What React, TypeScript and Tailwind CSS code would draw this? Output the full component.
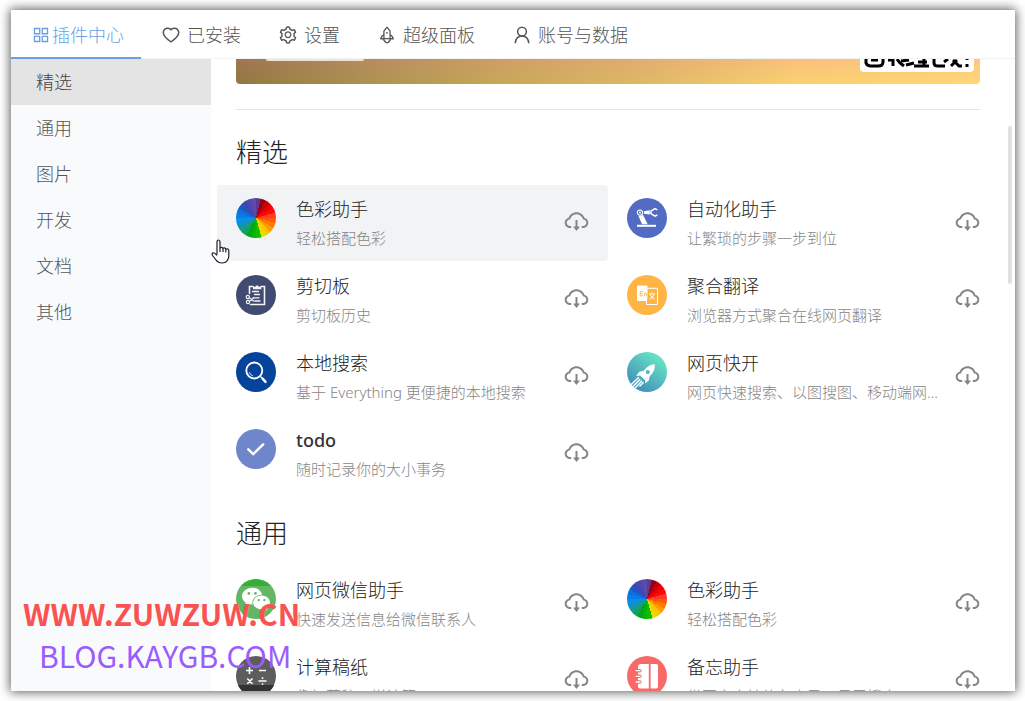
import type { ReactNode } from "react";
import {
  AiFillWechat,
  AiOutlineAppstore,
  AiOutlineCloudDownload,
  AiOutlineHeart,
  AiOutlineRocket,
  AiOutlineSetting,
} from "react-icons/ai";

type Plugin = { name: string; desc: string; icon: ReactNode; hovered?: boolean };

const wheel = [
  "#9b0012", "#c8000a", "#f00000", "#ff0808", "#ff3b30", "#ff5a00", "#ff7a00", "#ff9b00",
  "#ffc400", "#efd800", "#12bb00", "#00b800", "#00a51c", "#12a05a", "#159a8c", "#0d93bd",
  "#0a8ee8", "#0a7ce8", "#0f6fdc", "#1a58c4", "#3a49b4", "#4f47ae", "#5f4ba6", "#5b3a90",
];

const wheelStops = wheel.map((c, i) => `${c} ${i * 15}deg ${(i + 1) * 15}deg`).join(",");

function ColorWheel() {
  return (
    <div
      className="size-10 rounded-full"
      style={{ backgroundImage: `conic-gradient(from 14deg,${wheelStops})` }}
    />
  );
}

function Disc({ fill, children }: { fill: string; children: ReactNode }) {
  return (
    <svg viewBox="0 0 40 40" className="size-10" aria-hidden="true">
      <circle cx="20" cy="20" r="20" fill={fill} />
      {children}
    </svg>
  );
}

const clipboardIcon = (
  <Disc fill="#414a70">
    <g fill="none" stroke="#f2f3f7" strokeWidth="1.6" strokeLinecap="round">
      <path d="M17 11.5h-3.5v7M25 11.5h3.500v18H14.5" />
      <path d="M16.5 16.5h6M18.5 19.5h5M17 22.8h6M19 26h5" strokeWidth="1.3" />
      <circle cx="11.8" cy="22" r="1.6" strokeWidth="1.2" />
      <circle cx="12" cy="27" r="1.6" strokeWidth="1.2" />
      <path d="M13.3 22.8l4.700 3.400M13.3 26.2l4.200-3" strokeWidth="1.2" />
    </g>
    <path d="M17 14.2v-2.4h2.3a1.9 1.9 0 0 1 3.6 0h2.4v2.4z" fill="#f2f3f7" />
  </Disc>
);

const searchIcon = (
  <Disc fill="#06439a">
    <circle cx="18.3" cy="18.5" r="8" fill="none" stroke="#fff" strokeWidth="1.8" />
    <path d="M13.2 20.2a5.6 5.6 0 0 0 3.6 3.6" fill="none" stroke="#fff" strokeWidth=".9" />
    <path d="M24.500 24.500l1.500 1.500" stroke="#fff" strokeWidth="1.3" />
    <path d="M26.500 26.500l3 3.300" stroke="#fff" strokeWidth="2.500" strokeLinecap="round" />
  </Disc>
);

const todoIcon = (
  <Disc fill="#7086cb">
    <path d="M12.3 20.3l4.9 4.7 10-9.6" fill="none" stroke="#fff" strokeWidth="2.400" strokeLinecap="round" />
  </Disc>
);

const robotIcon = (
  <Disc fill="#516cc2">
    <circle cx="13" cy="14.6" r="2.6" fill="none" stroke="#fff" strokeWidth="1.1" />
    <circle cx="13" cy="14.6" r="1" fill="#fff" />
    <path d="M11.5 18.3l4.6-1.4 4.6 9.3h-5.6z" fill="#fff" />
    <path d="M17 13.2l5.8-1v4.4l-5.8-.8z" fill="#fff" />
    <path d="M30.3 11.8l-2.4-1.2-4 2.6v2.4l4 2.6 2.4-1.2" fill="none" stroke="#fff" strokeWidth="1.5" />
    <path d="M10 26.8h19v2H10z" fill="#fff" />
  </Disc>
);

const translateIcon = (
  <Disc fill="#ffb545">
    <path d="M20.500 13.3h10v16.2h-11V26" fill="none" stroke="#fff" strokeWidth="1" />
    <path d="M11 10.5h8.5a1 1 0 0 1 1 1v7.500l-.5 7H11.3a1.3 1.3 0 0 1-1.3-1.3V11.5a1 1 0 0 1 1-1z" fill="#fff" />
    <path d="M16.2 16.6h-3v4.2h3M13.2 18.7h2.6M17.6 20.9v-2.7q1.8-.7 2 .8v1.9" fill="none" stroke="#ffb545" strokeWidth=".9" />
    <path d="M22.2 18.8h5.8M25 17.4v1.4M23 24.2q3.4-1.7 4-5.2M23.2 19.2q1 3.600 4.600 5" fill="none" stroke="#fff" strokeWidth="1" />
  </Disc>
);

const rocketIcon = (
  <Disc fill="url(#rocket-sky)">
    <defs>
      <linearGradient id="rocket-sky" x1="0.2" y1="0.9" x2="0.8" y2="0.1">
        <stop offset="0" stopColor="#418fb9" />
        <stop offset="1" stopColor="#68e5c3" />
      </linearGradient>
    </defs>
    <path
      fillRule="evenodd"
      fill="#fff"
      d="M27.8 12.2q-6.6.2-11 6.6l-4.5 1-3.2 4.2 4-.5 5.3 5.1-.3 3 3.7-3.1 1-4.6q5.4-4.2 5-11.7zM20.8 18a2.1 2.1 0 1 1 0 4.2 2.1 2.1 0 0 1 0-4.2z"
    />
    <path d="M11.8 25.2l-7.5 7.3M13.3 27l-7.2 7.6M15 28.7l-6.8 7.2M16.5 30.2l-4 4.3" stroke="#fff" strokeWidth="1.5" />
  </Disc>
);

const wechatIcon = (
  <Disc fill="#63b764">
    <path d="M5 7a20 20 0 0 1 30 0z" fill="#35ae35" />
    <foreignObject x="4" y="4" width="32" height="32">
      <AiFillWechat className="size-8 text-white" />
    </foreignObject>
  </Disc>
);

const calcIcon = (
  <Disc fill="#5d5d5d">
    <path d="M1.8 29h36.4a20 20 0 0 1-36.4 0z" fill="#333" />
    <path
      d="M10 14.5h7M13.5 11v7M23 14.5h7M11.3 22.5l5.2 5.2M16.5 22.5l-5.2 5.2M22.5 25h8M26.5 21.3v1.6M26.5 27.2v1.6"
      stroke="#fff"
      strokeWidth="1.6"
      fill="none"
    />
  </Disc>
);

const memoIcon = (
  <Disc fill="#f96968">
    <path d="M14 8h7.8v24.4H13a2 2 0 0 1-2-2V11a3 3 0 0 1 3-3z" fill="#fff" />
    <path d="M23.6 8h5.8a1.6 1.6 0 0 1 1.6 1.6v21.2a1.6 1.6 0 0 1-1.6 1.6h-5.8z" fill="#fff" />
    <g fill="none" stroke="#f96968" strokeWidth="3.4" strokeLinecap="round">
      <path d="M10 14.7h3M10 20.3h3M10 26h3" />
    </g>
    <g fill="none" stroke="#fff" strokeWidth="1.3" strokeLinecap="round">
      <path d="M9 14.7h4.2M9 20.3h4.2M9 26h4.2" />
    </g>
  </Disc>
);

const sections: { title: string; plugins: Plugin[] }[] = [
  {
    title: "精选",
    plugins: [
      { name: "色彩助手", desc: "轻松搭配色彩", icon: <ColorWheel />, hovered: true },
      { name: "自动化助手", desc: "让繁琐的步骤一步到位", icon: robotIcon },
      { name: "剪切板", desc: "剪切板历史", icon: clipboardIcon },
      { name: "聚合翻译", desc: "浏览器方式聚合在线网页翻译", icon: translateIcon },
      { name: "本地搜索", desc: "基于 Everything 更便捷的本地搜索", icon: searchIcon },
      { name: "网页快开", desc: "网页快速搜索、以图搜图、移动端网页预览", icon: rocketIcon },
      { name: "todo", desc: "随时记录你的大小事务", icon: todoIcon },
    ],
  },
  {
    title: "通用",
    plugins: [
      { name: "网页微信助手", desc: "快速发送信息给微信联系人", icon: wechatIcon },
      { name: "色彩助手", desc: "轻松搭配色彩", icon: <ColorWheel /> },
      { name: "计算稿纸", desc: "像打草稿一样计算", icon: calcIcon },
      { name: "备忘助手", desc: "带图文支持的备忘录、易于搜索", icon: memoIcon },
    ],
  },
];

const categories = ["精选", "通用", "图片", "开发", "文档", "其他"];

function UserIcon() {
  return (
    <svg viewBox="0 0 20 20" className="size-5" fill="none" stroke="currentColor" strokeWidth="1.5" aria-hidden="true">
      <circle cx="10" cy="6.6" r="4.4" />
      <path d="M3.2 18.2C3.6 14 6 11 10 11s6.400 3 6.800 7.200" />
    </svg>
  );
}

function Tab({ icon, label, active }: { icon: ReactNode; label: string; active?: boolean }) {
  return (
    <button
      type="button"
      className={
        active
          ? "flex h-[49px] items-center gap-px border-b-2 border-[#6a9fe3] pl-5 pr-[17px] pt-0.5 text-[#6a9fe3]"
          : "flex h-[49px] items-center gap-1.5 border-b-2 border-transparent pl-5 pr-[17px] pt-0.5 text-[#555]"
      }
    >
      {icon}
      <span>{label}</span>
    </button>
  );
}

function PluginCard({ plugin }: { plugin: Plugin }) {
  return (
    <article
      className={
        plugin.hovered
          ? "flex h-[76px] rounded bg-[#f2f3f5] px-[18px] pl-[19px]"
          : "flex h-[76px] rounded px-[18px] pl-[19px]"
      }
    >
      <div className="mt-[13px] size-10 shrink-0">{plugin.icon}</div>
      <div className="ml-5 mr-[11px] min-w-0 flex-1 pt-[11px]">
        <h3 className={plugin.name === "todo" ? "truncate text-lg/[26px] font-medium text-[#333]" : "truncate text-lg/[26px] text-[#222]"}>
          {plugin.name}
        </h3>
        <p className="mt-[3px] truncate text-[15px]/[26px] text-[#858585]">{plugin.desc}</p>
      </div>
      <button type="button" aria-label={`下载 ${plugin.name}`} className="mt-[23px] self-start text-[#858585]">
        <AiOutlineCloudDownload className="size-[27px]" />
      </button>
    </article>
  );
}

export default function App() {
  return (
    <div className="relative h-screen overflow-hidden bg-white pb-2.5 pl-[11px] pr-2.5 pt-2.5 font-['Noto_Sans','Noto_Sans_CJK_SC',sans-serif] font-light">
      <div className="flex h-full flex-col overflow-hidden bg-white shadow-[0_0_10px_1px_rgba(0,0,0,0.65)]">
        <header className="shrink-0 border-b border-[#f2f2f2]">
          <nav className="-mb-px flex text-lg" aria-label="主导航">
            <Tab active label="插件中心" icon={<AiOutlineAppstore className="size-5" />} />
            <Tab label="已安装" icon={<AiOutlineHeart className="size-5" />} />
            <Tab label="设置" icon={<AiOutlineSetting className="size-5" />} />
            <Tab label="超级面板" icon={<AiOutlineRocket className="size-5" />} />
            <Tab label="账号与数据" icon={<UserIcon />} />
          </nav>
        </header>

        <div className="flex min-h-0 flex-1">
          <aside className="w-[200px] shrink-0 bg-[#f9fafc]">
            <ul>
              {categories.map((c, i) => (
                <li key={c}>
                  <button
                    type="button"
                    className={
                      i === 0
                        ? "h-[46px] w-full bg-[#e4e4e4] px-[25px] text-left text-lg text-[#444]"
                        : "h-[46px] w-full px-[25px] text-left text-lg text-[#555]"
                    }
                  >
                    {c}
                  </button>
                </li>
              ))}
            </ul>
          </aside>

          <main className="relative min-w-0 flex-1 overflow-hidden pl-[25px] pr-[35px]">
            <div className="flex h-[25px] justify-between overflow-hidden rounded-b bg-[linear-gradient(180deg,rgba(255,150,150,0.25),rgba(255,225,60,0.12)),linear-gradient(100deg,#806a3e_0%,#a08850_18%,#bfa158_36%,#dab468_55%,#f8cf74_75%,#ffd67c_100%)]">
              <div className="ml-[30px] h-0.5 w-[98px] rounded-b-full bg-[#eee4d4]" />
              <div className="mr-1.5 h-[13px] w-[114px] rounded-b bg-white">
                <svg viewBox="0 0 114 13" className="h-[13px] w-full" fill="none" stroke="#000" strokeWidth="3" aria-hidden="true">
                  <path d="M6 0v4q1 3 5 3h7q5 0 5-4V0M11 1h7M28 1h5v6M37 0l3 4 4 3M41 2l8-1M46 6l8-2M58 3h9M54 7h15M64 0v6M74 0v4q0 3 4 3h7M84 3l4-3M91 7l6-6M93 1l6 6h3M107 0v1M107 5v3" />
                </svg>
              </div>
            </div>
            <hr className="mt-[25px] border-[#e4e4e4]" />

            {sections.map((s, i) => (
              <section key={s.title} className={i === 0 ? "pt-[22px]" : "pt-[21px]"}>
                <h2 className="text-[26px]/[40px] text-[#222]">{s.title}</h2>
                <div className="-mx-[19px] mt-[13px] grid grid-cols-2 gap-y-px">
                  {s.plugins.map((p) => (
                    <PluginCard key={p.name} plugin={p} />
                  ))}
                </div>
              </section>
            ))}

            <div className="absolute right-[3px] top-[67px] h-[158px] w-1 rounded-full bg-[#e0e0e0]" />
          </main>
        </div>
      </div>

      <svg viewBox="0 0 20 26" className="absolute left-[211px] top-[239px] h-[26px] w-5" aria-hidden="true">
        <path
          d="M6 15.500V3q0-2 1.500-2T9 3v6q1.500-1.300 3 .3 1.700-1 2.800.7 2.700-.7 3 1.600v5.200q0 2.800-1.300 4.200-1.500 3-5.500 3-4 0-6-3L1.500 16.500Q.5 14.500 2 13.800q1.600-.4 4 2.700M9 9v4M12 9.300V13M14.800 10v3.500"
          fill="#fff"
          stroke="#1c1c2c"
          strokeWidth="1.2"
          strokeLinejoin="round"
        />
      </svg>

      <div className="pointer-events-none absolute bottom-[25px] left-[23px] font-['Noto_Sans_CJK_SC',sans-serif] text-[30px]/[42px]">
        <p className="font-bold text-[#fa5252]">WWW.ZUWZUW.CN</p>
        <p className="pl-4 font-normal text-[#9a5cff]">BLOG.KAYGB.COM</p>
      </div>
    </div>
  );
}
